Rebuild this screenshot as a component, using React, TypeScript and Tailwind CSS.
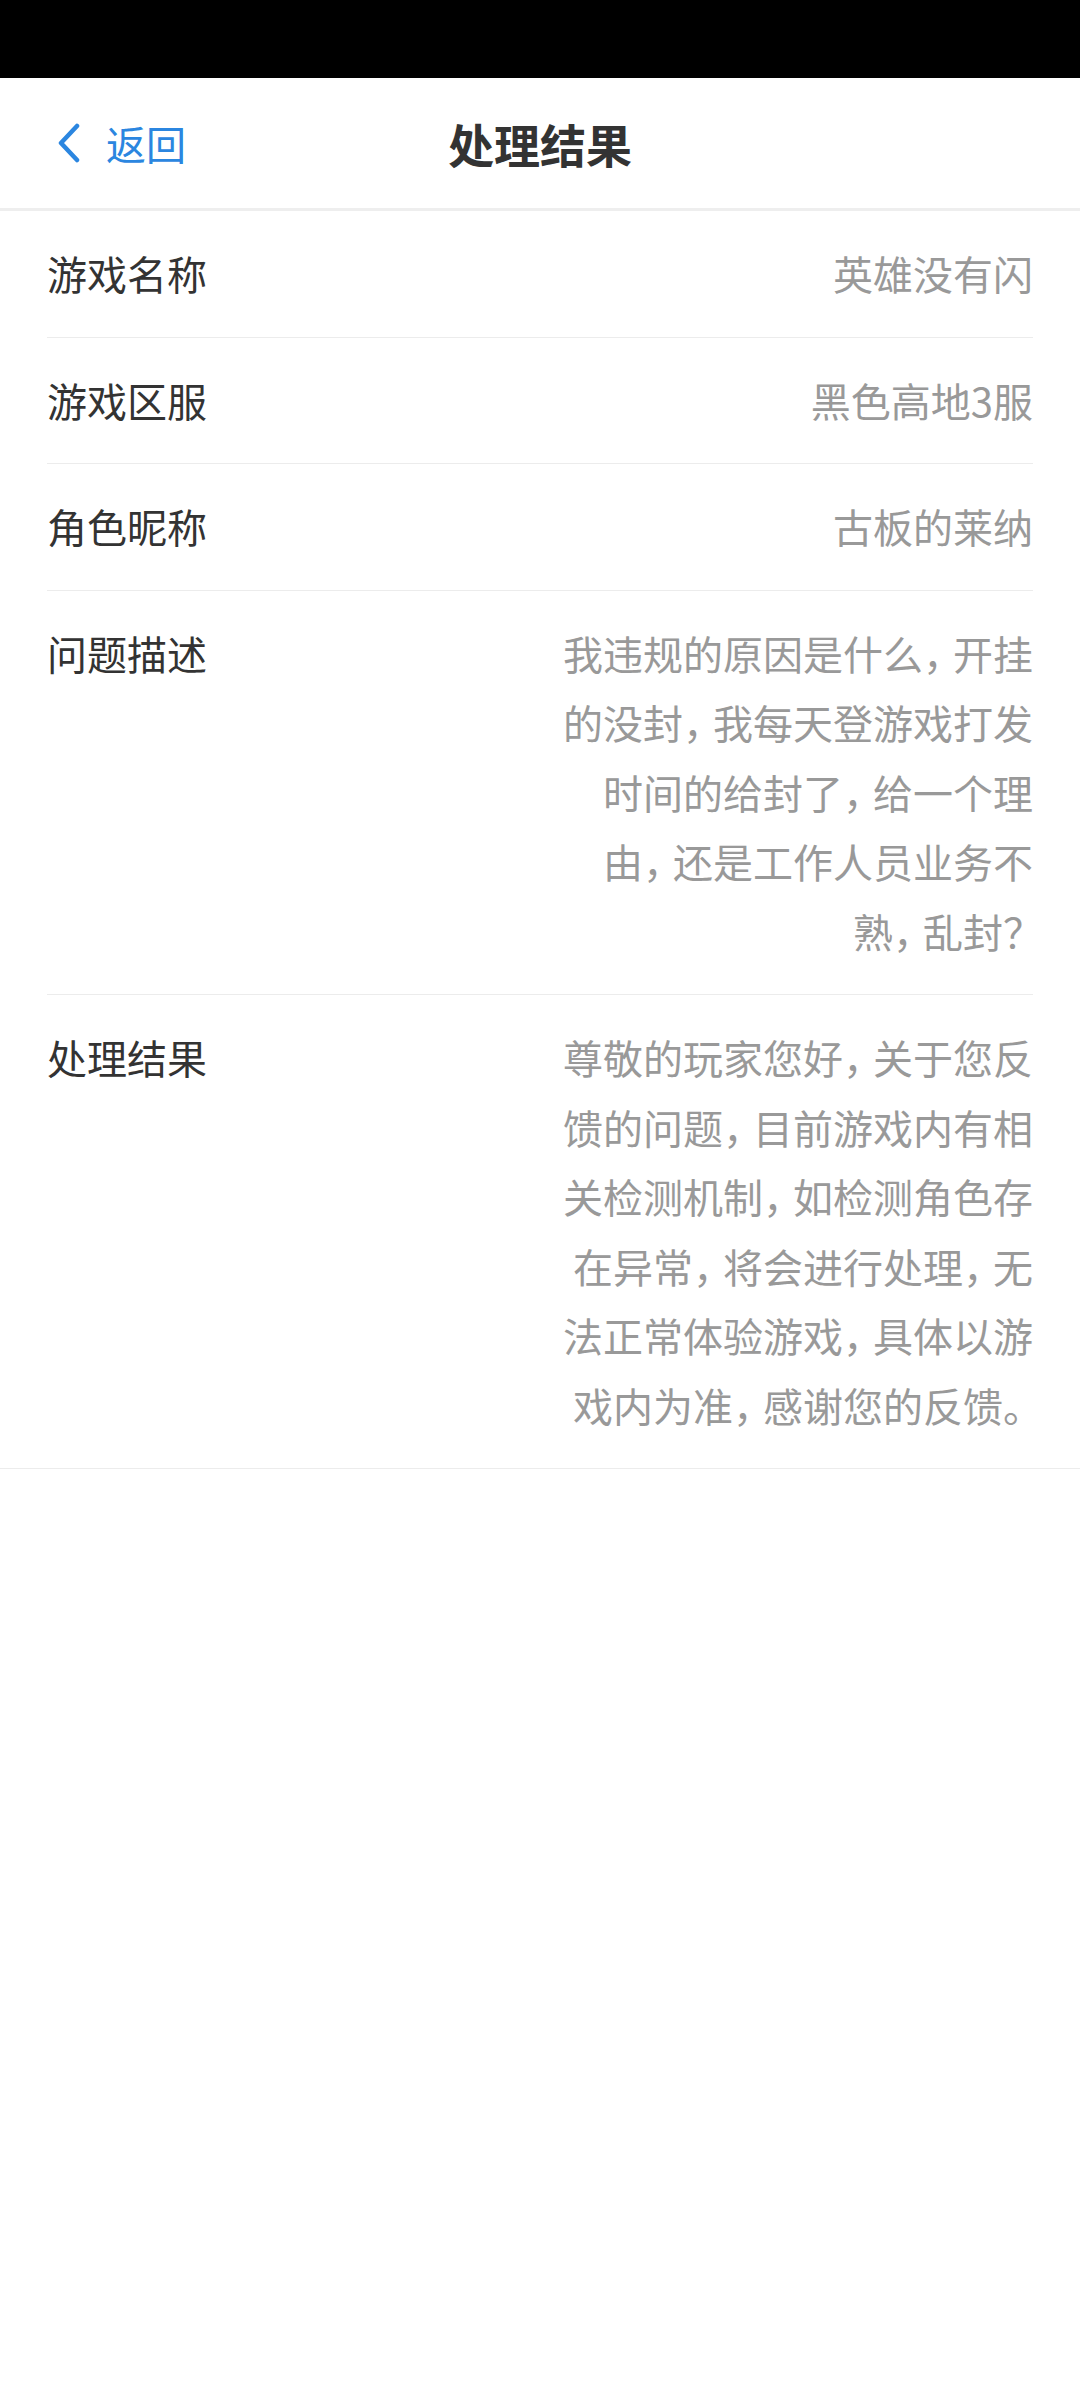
import React from "react";

const font = { fontFamily: '"Noto Sans CJK SC", "Noto Sans", sans-serif' };

function P({ c }: { c: string }) {
  return <span className="tracking-[-10px]">{c}</span>;
}

function Row({ label, children, last }: { label: string; children: React.ReactNode; last?: boolean }) {
  return (
    <div className={last ? "border-b border-[#ececec]" : "px-[47px]"}>
      <div
        className={
          "flex items-start justify-between py-[28px] " +
          (last ? "mx-[47px]" : "border-b border-[#ececec]")
        }
      >
        <div className="text-[40px] leading-[69.5px] text-[#333333] whitespace-nowrap">{label}</div>
        <div className="text-[40px] leading-[69.5px] text-[#999999] text-right whitespace-nowrap">{children}</div>
      </div>
    </div>
  );
}

export default function App() {
  return (
    <div className="w-[1080px] min-h-[2400px] bg-white" style={font}>
      <div className="h-[78px] bg-black" />
      <div className="relative h-[133px] flex items-center justify-center border-b-[3px] border-[#eeeeee]">
        <div className="absolute left-[56px] top-0 bottom-0 flex items-center gap-[24px] text-[#2b86e0]">
          <svg width="26" height="40" viewBox="0 0 26 40" fill="none">
            <path d="M21 3 L5 20 L21 37" stroke="#2b86e0" strokeWidth="4.5" strokeLinecap="round" strokeLinejoin="round" />
          </svg>
          <span className="text-[40px] leading-none">返回</span>
        </div>
        <div className="text-[46px] font-semibold text-[#333333] leading-none">处理结果</div>
      </div>

      <Row label="游戏名称">英雄没有闪</Row>
      <Row label="游戏区服">黑色高地3服</Row>
      <Row label="角色昵称">古板的莱纳</Row>
      <Row label="问题描述">
        我违规的原因是什么<P c="，" />开挂
        <br />
        的没封<P c="，" />我每天登游戏打发
        <br />
        时间的给封了<P c="，" />给一个理
        <br />
        由<P c="，" />还是工作人员业务不
        <br />
        熟<P c="，" />乱封<P c="？" />
      </Row>
      <Row label="处理结果" last>
        尊敬的玩家您好<P c="，" />关于您反
        <br />
        馈的问题<P c="，" />目前游戏内有相
        <br />
        关检测机制<P c="，" />如检测角色存
        <br />
        在异常<P c="，" />将会进行处理<P c="，" />无
        <br />
        法正常体验游戏<P c="，" />具体以游
        <br />
        戏内为准<P c="，" />感谢您的反馈<P c="。" />
      </Row>
    </div>
  );
}
